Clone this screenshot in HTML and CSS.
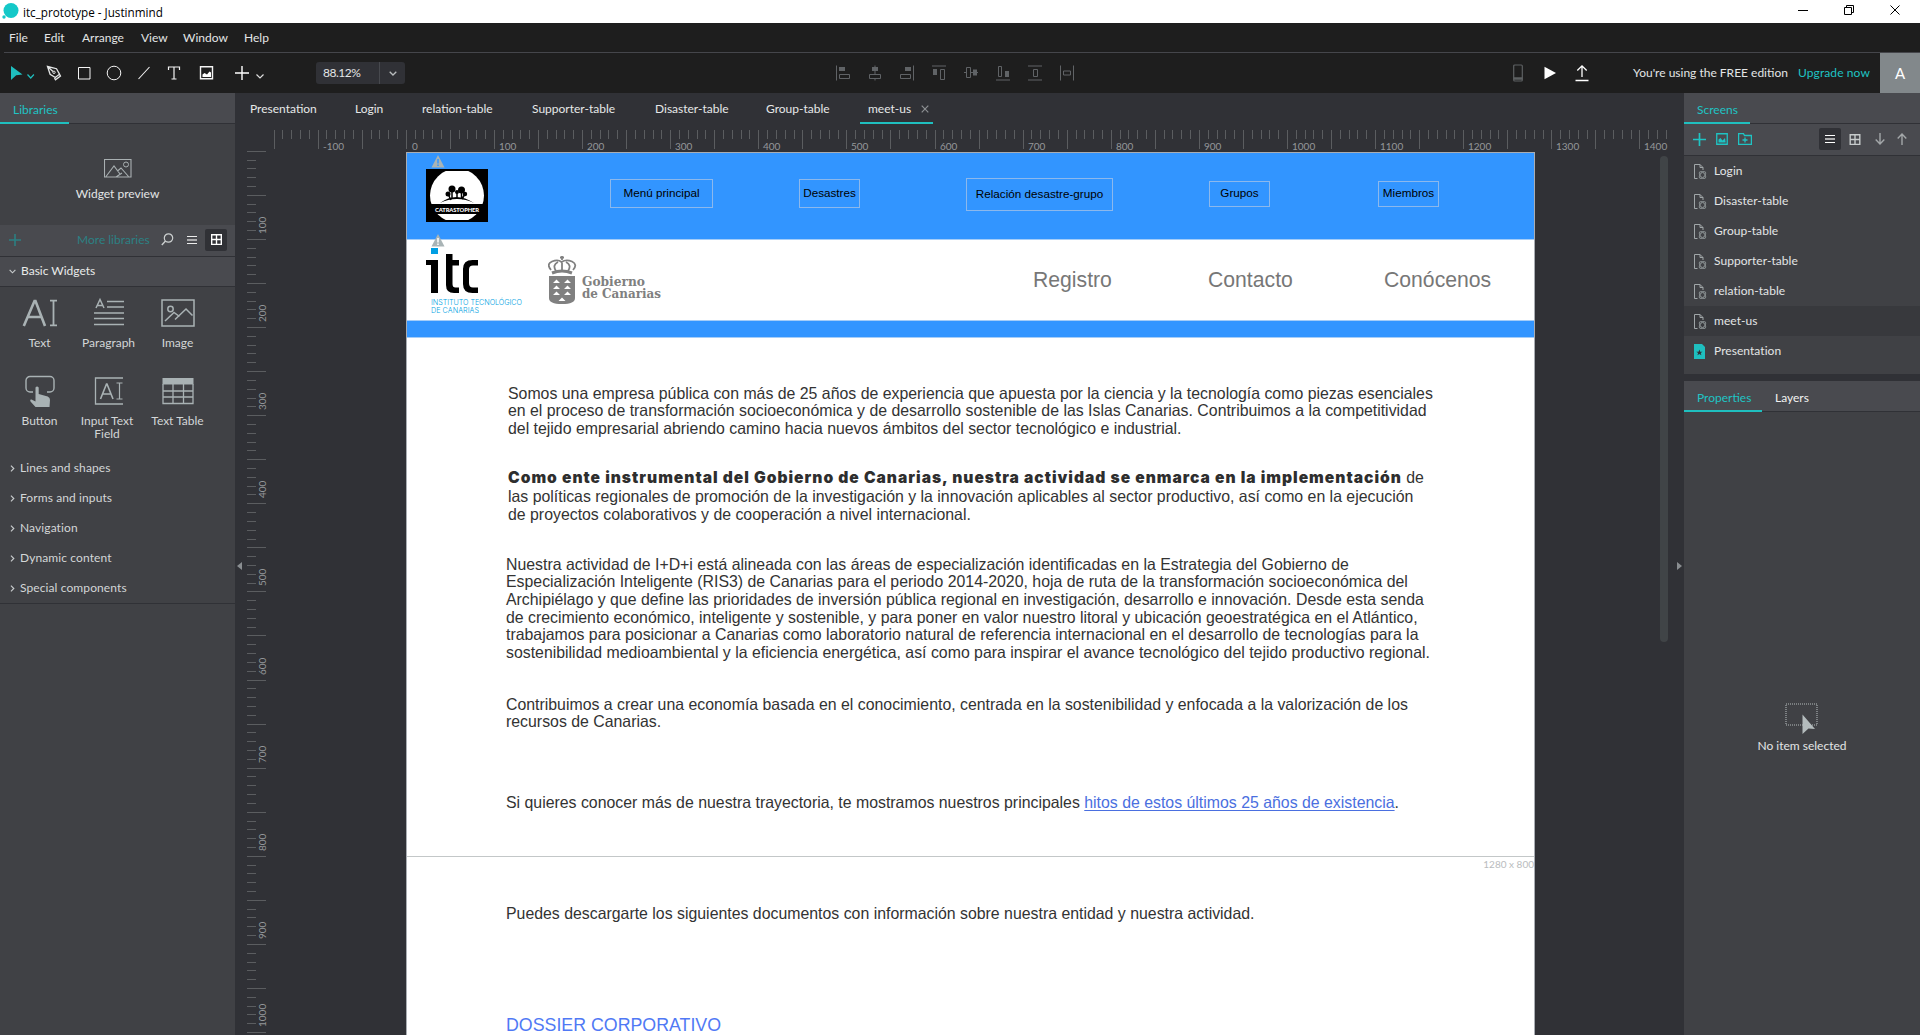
FILE: index.html
```html
<!DOCTYPE html>
<html lang="en">
<head>
<meta charset="utf-8">
<title>itc_prototype - Justinmind</title>
<link rel="stylesheet" href="styles.css">
</head>
<body>
<svg class="defs" aria-hidden="true">
  <symbol id="i-screen" viewBox="0 0 14 16"><path d="M4.500 14.500H1.500V.5h5.500l3 3V6" fill="none" stroke="#a0a6a8"/><path d="M7 .500v3h3" fill="none" stroke="#a0a6a8"/><ellipse cx="9.500" cy="11" rx="2.300" ry="4" transform="rotate(-38 9.500 11)" fill="none" stroke="#858b8d"/><ellipse cx="9.500" cy="11" rx="2.300" ry="4" transform="rotate(38 9.500 11)" fill="none" stroke="#858b8d"/></symbol>
  <symbol id="i-warn" viewBox="0 0 14 13"><path d="M7 0L13.500 12.500H.5z" fill="#a9b4b6"/><path d="M7 4v4.500M7 9.500v1.500" stroke="var(--mark)" stroke-width="1.500"/></symbol>
  <symbol id="i-chev" viewBox="0 0 8 5"><path d="M.7.7L4 4 7.300.7" fill="none" stroke="currentColor" stroke-width="1.300"/></symbol>
  <symbol id="i-grid" viewBox="0 0 12 12"><path d="M.75.75h10.500v10.500H.75zM6 .75v10.500M.75 6h10.500" fill="none" stroke="currentColor" stroke-width="1.500"/></symbol>
  <symbol id="i-list" viewBox="0 0 10 10"><path d="M0 1.500h10M0 8.500h10" stroke="currentColor"/><path d="M0 5h10" stroke="currentColor" stroke-width="2" opacity=".6"/></symbol>
</svg>

<header class="titlebar">
  <svg class="logo" width="17" height="17" viewBox="0 0 17 17"><circle cx="9" cy="7.500" r="7.500" fill="#14c8c8"/><circle cx="2" cy="14" r="1.700" fill="#14c8c8"/></svg>
  <span class="title">itc_prototype - Justinmind</span>
  <div class="win">
    <svg width="10" height="12" viewBox="0 0 10 12"><path d="M0 6.500h10" stroke="#000"/></svg>
    <svg width="10" height="12" viewBox="0 0 10 12"><path d="M.5 3.500h7v7h-7zM2.500 3.500v-2h7v7h-2" fill="none" stroke="#000"/></svg>
    <svg width="10" height="12" viewBox="0 0 10 12"><path d="M.5 1.500l9 9M9.500 1.500l-9 9" stroke="#000"/></svg>
  </div>
</header>
<nav class="menu"><span>File</span><span>Edit</span><span>Arrange</span><span>View</span><span>Window</span><span>Help</span></nav>

<div class="toolbar">
  <div class="tools">
    <svg class="select" width="28" height="20" viewBox="0 0 28 20"><path d="M1 3l11.500 8.500-6.300.8L1 17z" fill="#1fbfbf"/><path d="M17.500 11.500l3.200 3.500 3.200-3.500" fill="none" stroke="#1fbfbf" stroke-width="1.200"/></svg>
    <svg width="16" height="16" viewBox="0 0 16 16"><path d="M1.500 1.500l9 2.200 3 5.500-4.200 3.300-5.200-3.200zM1.500 1.500l5.500 5M13.700 9.500l.8 1.500-5 3.800-1-1.800" fill="none" stroke="#e4e6e6" stroke-width="1.300"/><circle cx="8" cy="7.300" r="1.200" fill="none" stroke="#e4e6e6"/></svg>
    <svg width="16" height="16" viewBox="0 0 16 16"><path d="M2.500 2.500h11.500v11.500H2.500z" fill="none" stroke="#f4f4f4"/></svg>
    <svg width="16" height="16" viewBox="0 0 16 16"><circle cx="8" cy="8" r="6.800" fill="none" stroke="#f4f4f4"/></svg>
    <svg width="16" height="16" viewBox="0 0 16 16"><path d="M2.500 14L13.500 2" stroke="#f4f4f4" stroke-width="1.100"/></svg>
    <svg width="16" height="16" viewBox="0 0 16 16"><path d="M2.500 5V2h11v3M8 2v12M5.500 14h5" fill="none" stroke="#f4f4f4" stroke-width="1.200"/></svg>
    <svg class="pic" width="16" height="16" viewBox="0 0 16 16"><path d="M2.500 1.800h12v12h-12z" fill="none" stroke="#f4f4f4" stroke-width="1.400"/><path d="M4.500 12V9.500l2-1.500 2.500 1.500 2.500-3 1.500 1v4.500z" fill="#fff"/></svg>
    <svg class="plus" width="30" height="16" viewBox="0 0 30 16"><path d="M1 8h14M8 1v14" stroke="#fff" stroke-width="1.400"/><path d="M22.500 9.500l3.500 3.500 3.500-3.500" fill="none" stroke="#ddd" stroke-width="1.200"/></svg>
  </div>
  <div class="zoom"><span>88.12%</span><i><svg width="8" height="5"><use href="#i-chev"/></svg></i></div>
  <div class="aligns">
    <svg viewBox="0 0 14 16"><path d="M.5.500v15"/><path d="M3.500 9.500h10v4h-10z"/><path class="f" d="M3 2h6v4H3z"/></svg>
    <svg viewBox="0 0 14 16"><path d="M7 .5v9M7 13.500v2"/><path d="M1.500 9.500h11v4h-11z"/><path class="f" d="M4 2h6v4H4z"/></svg>
    <svg viewBox="0 0 14 16"><path d="M13.500.500v15"/><path d="M.5 9.500h10v4H.5z"/><path class="f" d="M5 2h6v4H5z"/></svg>
    <svg viewBox="0 0 14 16"><path d="M0 1h14"/><path d="M8.500 4.500h4v10h-4z"/><path class="f" d="M1 4h4v6H1z"/></svg>
    <svg viewBox="0 0 14 16"><path d="M0 7.500h2.500M6.500 7.500h7.500"/><path d="M2.500 2.500h4v10h-4z"/><path class="f" d="M9 4.500h4v6H9z"/></svg>
    <svg viewBox="0 0 14 16"><path d="M0 15h14"/><path d="M2.500 1.500h3v10h-3z"/><path class="f" d="M9 6h4v6H9z"/></svg>
    <svg viewBox="0 0 14 16"><path d="M0 1h14M0 15h14"/><path d="M5.500 4.500h4v7h-4z"/></svg>
    <svg viewBox="0 0 14 16"><path d="M.5.500v15M13.500.500v15"/><path d="M3.500 6h7v4h-7z"/></svg>
  </div>
  <div class="actions">
    <svg width="16" height="18" viewBox="0 0 16 18"><rect x="3.700" y="1" width="8.600" height="16" rx="1" fill="none" stroke="#5d6062" stroke-width="1.200"/><path d="M3.500 14.500h9" stroke="#5d6062" stroke-width="2.500"/></svg>
    <svg width="16" height="18" viewBox="0 0 16 18"><path d="M2.500 2.700L14 9 2.500 15.300z" fill="#fff"/></svg>
    <svg width="16" height="18" viewBox="0 0 16 18"><path d="M8 13V2M3.300 6.500L8 1.800l4.700 4.700M1.500 16.500h13" fill="none" stroke="#fff" stroke-width="1.300"/></svg>
  </div>
  <span class="edition">You're using the FREE edition</span>
  <span class="upgrade">Upgrade now</span>
  <span class="avatar">A</span>
</div>

<div class="main">
  <aside class="left">
    <div class="tabhead"><span class="on lib">Libraries</span></div>
    <div class="preview">
      <svg width="28" height="19" viewBox="0 0 28 19"><path d="M.5.500h26.500v17.500H.5zM2 17.500L10 7l6 8M13.500 12L17 9l7.500 8.500M12 18l6-4" fill="none" stroke="#a9b0b2" stroke-width="1.100"/><circle cx="22" cy="5.500" r="2.500" fill="none" stroke="#a9b0b2"/></svg>
      <span>Widget preview</span>
    </div>
    <div class="libbar">
      <svg width="12" height="12" viewBox="0 0 12 12"><path d="M0 6h12M6 0v12" stroke="#2c7f82" stroke-width="1.600"/></svg>
      <span>More libraries</span>
      <svg class="lens" width="13" height="13" viewBox="0 0 13 13"><circle cx="7.500" cy="5" r="4.200" fill="none" stroke="#ccd0d0" stroke-width="1.200"/><path d="M4.500 8L.8 12" stroke="#ccd0d0" stroke-width="1.400"/></svg>
      <svg class="lst" width="10" height="10"><use href="#i-list"/></svg>
      <b><svg width="11" height="11"><use href="#i-grid"/></svg></b>
    </div>
    <div class="cat open"><svg width="7" height="5"><use href="#i-chev"/></svg>Basic Widgets</div>
    <div class="widgets">
      <div><svg viewBox="0 0 36 32"><path d="M1.800 29L12.500 4h1L23 29M5.500 20h14" fill="none" stroke="#a9b2b4" stroke-width="2.600"/><path d="M28 3.700h7M28 28.300h7M31.500 3.700v24.600" stroke="#a9b2b4" stroke-width="1.800"/></svg><span>Text</span></div>
      <div><svg viewBox="0 0 36 32"><path d="M5 11l4-8.500L13 11M6.500 8.500h5" fill="none" stroke="#a9b2b4" stroke-width="1.500"/><path d="M16 4.500h17M16 10h17M3 16h30M3 21.500h30M3 27.500h30" stroke="#a9b2b4" stroke-width="1.700"/></svg><span>Paragraph</span></div>
      <div><svg viewBox="0 0 36 32"><path d="M2 3h32v26H2zM5 24l9-8.500 5.500 4M15 22.500l11-10.500 6.500 6.500" fill="none" stroke="#a9b2b4" stroke-width="1.500"/><circle cx="10.500" cy="12" r="2.700" fill="none" stroke="#a9b2b4" stroke-width="1.500"/></svg><span>Image</span></div>
      <div><svg viewBox="0 0 36 32"><path d="M11 17H8a4 4 0 01-4-4V5.500a4 4 0 014-4h20a4 4 0 014 4V13a4 4 0 01-4 4h-3" fill="none" stroke="#a9b2b4" stroke-width="1.400"/><path d="M13.500 12.500q1.500-2 3.200 0V19l9 2.500q2.500 1 2.300 3.500l-.5 7H13.500l-5-5.500q-1-2.500 1-2l4 2z" fill="#a9b2b4"/></svg><span>Button</span></div>
      <div class="inp"><svg viewBox="0 0 36 32"><path d="M32 3H4.500v26H32" fill="none" stroke="#a9b2b4" stroke-width="1.300"/><path d="M9.500 24L15.500 9h.5l6 15M12 19h8" fill="none" stroke="#a9b2b4" stroke-width="1.600"/><path d="M25.500 8h6M25.500 24h6M28.500 8v16" stroke="#a9b2b4" stroke-width="1.200"/></svg><span>Input Text<br>Field</span></div>
      <div><svg viewBox="0 0 36 32"><path d="M2.500 3h31v6.500h-31z" fill="#a9b2b4"/><path d="M3 9v19.500h30V9M3 16h30M3 22h30M13 9v19.500M23.500 9v19.500" fill="none" stroke="#a9b2b4" stroke-width="1.300"/></svg><span>Text Table</span></div>
    </div>
    <div class="cat"><svg class="r" width="7" height="5"><use href="#i-chev"/></svg>Lines and shapes</div>
    <div class="cat"><svg class="r" width="7" height="5"><use href="#i-chev"/></svg>Forms and inputs</div>
    <div class="cat"><svg class="r" width="7" height="5"><use href="#i-chev"/></svg>Navigation</div>
    <div class="cat"><svg class="r" width="7" height="5"><use href="#i-chev"/></svg>Dynamic content</div>
    <div class="cat"><svg class="r" width="7" height="5"><use href="#i-chev"/></svg>Special components</div>
    <div class="rule"></div>
  </aside>

  <section class="center">
    <div class="tabs"><span>Presentation</span><span>Login</span><span>relation-table</span><span>Supporter-table</span><span>Disaster-table</span><span>Group-table</span><span class="cur">meet-us <svg width="8" height="8" viewBox="0 0 8 8"><path d="M.7.700l6.600 6.600M7.300.700L.7 7.300" stroke="#8d9093" stroke-width="1.200"/></svg></span></div>
    <svg class="hruler" id="hruler" width="1449" height="22"></svg>
    <div class="stage">
      <div class="vcol"><svg id="vruler" width="36" height="883"></svg></div>
      <article class="page">
        <div class="hero">
          <svg class="cat-logo" width="62" height="53" viewBox="0 0 62 53"><path d="M0 0h62v53H0z"/><circle cx="31" cy="26.500" r="27" fill="#fff"/><path d="M0 0h62v53H0z" fill="none" stroke="#000" stroke-width="4"/><path d="M14 34q16-12 34 0q-8-4-17-4t-17 4z"/><circle cx="26" cy="20" r="3.500"/><circle cx="35.500" cy="21" r="3.500"/><circle cx="22" cy="25" r="2.500"/><circle cx="39" cy="25" r="2.200"/><circle cx="31" cy="23" r="2"/><path d="M26 20v10M35.500 21v9M22 25l3 6M39 25l-3 5M31 24v6" stroke="#000" stroke-width="1.500"/><path d="M2 35h58v10H2z"/><text x="9" y="42.500" textLength="44" fill="#fff" font-family="Lato" font-weight="900" font-size="5.800">CATRASTOPHER</text></svg>
          <svg class="warn" width="14" height="13"><use href="#i-warn"/></svg>
          <span class="btn b1">Menú principal</span>
          <span class="btn b2">Desastres</span>
          <span class="btn b3">Relación desastre-grupo</span>
          <span class="btn b4">Grupos</span>
          <span class="btn b5">Miembros</span>
        </div>
        <div class="brand">
          <svg class="itc" width="100" height="70" viewBox="0 0 100 70"><path d="M5 0h7v6H5z" fill="#009fe3"/><path d="M0 12h12v33H5V17H0zM20 6h6.500v6H33v5.500h-6.500V36q0 3.500 3 3.500H33V45h-5q-8 0-8-8zM52 12v5.500h-5q-4 0-4 4V35q0 4.500 4 4.500h5V45h-5.500Q37 45 37 36V21q0-9 9.500-9z"/><g fill="#009fe3" font-family="Inter" font-weight="300" font-size="7.200"><text x="5" y="57" textLength="91">INSTITUTO TECNOLÓGICO</text><text x="5" y="64.500" textLength="48">DE CANARIAS</text></g></svg>
          <svg class="warn" width="14" height="13"><use href="#i-warn"/></svg>
          <svg class="gob" width="150" height="54" viewBox="0 0 150 54"><g fill="none" stroke="#808080" stroke-width="1.800"><path d="M3 14Q-2 8 4 5.500q6-2.500 9.500.500Q18 3 24 5.500q6 3 1 8.500M8 15q-4-6 2-9M20 15q4-6-2-9M14 5v9M14 0v4M12 1.500h4"/><path d="M4 17q10-4 20 0" stroke-width="3"/></g><path d="M1 20h26v22q0 6-13 6T1 42z" fill="#808080"/><path d="M5 27l3.500-3.500L12 27zM16 27l3.500-3.500L23 27zM5 33l3.500-3.500L12 33zM16 33l3.500-3.500L23 33zM5 39l3.500-3.500L12 39zM16 39l3.500-3.500L23 39zM10.500 45l3.500-3.500 3.500 3.500z" fill="#fff"/><g fill="#808080" font-family="DejaVu Serif" font-weight="bold" font-size="13"><text x="34" y="30" textLength="63" lengthAdjust="spacingAndGlyphs">Gobierno</text><text x="34" y="42" textLength="79" lengthAdjust="spacingAndGlyphs">de Canarias</text></g></svg>
          <span class="lk l1">Registro</span><span class="lk l2">Contacto</span><span class="lk l3">Conócenos</span>
        </div>
        <div class="strip"></div>
        <div class="copy">
          <p class="p1">Somos una empresa pública con más de 25 años de experiencia que apuesta por la ciencia y la tecnología como piezas esenciales<br>en el proceso de transformación socioeconómica y de desarrollo sostenible de las Islas Canarias. Contribuimos a la competitividad<br>del tejido empresarial abriendo camino hacia nuevos ámbitos del sector tecnológico e industrial.</p>
          <p class="p2"><span class="lead"><b>Como ente instrumental del Gobierno de Canarias, nuestra actividad se enmarca en la implementación</b> de</span>las políticas regionales de promoción de la investigación y la innovación aplicables al sector productivo, así como en la ejecución<br>de proyectos colaborativos y de cooperación a nivel internacional.</p>
          <p class="p3">Nuestra actividad de I+D+i está alineada con las áreas de especialización identificadas en la Estrategia del Gobierno de<br>Especialización Inteligente (RIS3) de Canarias para el periodo 2014-2020, hoja de ruta de la transformación socioeconómica del<br>Archipiélago y que define las prioridades de inversión pública regional en investigación, desarrollo e innovación. Desde esta senda<br>de crecimiento económico, inteligente y sostenible, y para poner en valor nuestro litoral y ubicación geoestratégica en el Atlántico,<br>trabajamos para posicionar a Canarias como laboratorio natural de referencia internacional en el desarrollo de tecnologías para la<br>sostenibilidad medioambiental y la eficiencia energética, así como para inspirar el avance tecnológico del tejido productivo regional.</p>
          <p class="p4">Contribuimos a crear una economía basada en el conocimiento, centrada en la sostenibilidad y enfocada a la valorización de los<br>recursos de Canarias.</p>
          <p class="p5">Si quieres conocer más de nuestra trayectoria, te mostramos nuestros principales <a>hitos de estos últimos 25 años de existencia</a>.</p>
        </div>
        <div class="fold">1280 x 800</div>
        <div class="below">
          <p>Puedes descargarte los siguientes documentos con información sobre nuestra entidad y nuestra actividad.</p>
          <p class="dossier">DOSSIER CORPORATIVO</p>
        </div>
      </article>
      <div class="scroll"></div>
    </div>
    <i class="fl"></i><i class="fr"></i>
  </section>

  <aside class="right">
    <div class="tabhead"><span class="on scr">Screens</span></div>
    <div class="scrbar">
      <svg width="13" height="13" viewBox="0 0 13 13"><path d="M0 6.500h13M6.500 0v13" stroke="#1fc4c4" stroke-width="1.700"/></svg>
      <svg class="m1" width="12" height="12" viewBox="0 0 12 12"><path d="M.75.75h10.500v10.500H.75z" fill="none" stroke="#1fc4c4" stroke-width="1.300"/><path d="M2.500 9.500V6.500L4.500 5l2 2.500L9 5l.7 4.500z" fill="#1fc4c4"/></svg>
      <svg class="m2" width="14" height="12" viewBox="0 0 14 12"><path d="M.6 11.300V.7h4.900l1 1.800h6.900v8.800zM7 4.500v5M4.500 7h5" fill="none" stroke="#1fc4c4" stroke-width="1.300"/></svg>
      <b><svg width="10" height="10"><use href="#i-list"/></svg></b>
      <svg class="m3" width="12" height="11"><use href="#i-grid"/></svg>
      <svg class="m4" width="10" height="12" viewBox="0 0 10 12"><path d="M5 0v11M.7 6.500L5 11l4.300-4.500" fill="none" stroke="currentColor" stroke-width="1.400"/></svg>
      <svg class="m5" width="10" height="12" viewBox="0 0 10 12"><path d="M5 12V1M.7 5.500L5 1l4.300 4.500" fill="none" stroke="currentColor" stroke-width="1.400"/></svg>
    </div>
    <ul class="screens">
      <li><svg><use href="#i-screen"/></svg>Login</li>
      <li><svg><use href="#i-screen"/></svg>Disaster-table</li>
      <li><svg><use href="#i-screen"/></svg>Group-table</li>
      <li><svg><use href="#i-screen"/></svg>Supporter-table</li>
      <li><svg><use href="#i-screen"/></svg>relation-table</li>
      <li class="sel"><svg><use href="#i-screen"/></svg>meet-us</li>
      <li><svg viewBox="0 0 14 16"><path d="M1 0h8l3 3v12H1z" fill="#1fbfbf"/><path d="M6.400 5.500l.8 2.200h2.300L7.700 9l.7 2.300-2-1.400-2 1.400L5.100 9 3.300 7.700h2.300z" fill="#303136"/></svg>Presentation</li>
    </ul>
    <div class="tabhead props"><span class="on prp">Properties</span><span class="lay">Layers</span></div>
    <div class="empty">
      <svg width="34" height="32" viewBox="0 0 34 32"><path d="M1 2h31v21H1z" fill="none" stroke="#8d9294" stroke-width="1.600" stroke-dasharray="1 1"/><path d="M17.500 12.500L30 27l-6.500-.500L17.500 32z" fill="#b4bcbd"/></svg>
      <span>No item selected</span>
    </div>
  </aside>
</div>
<script src="rulers.js"></script>
</body>
</html>
```
FILE: styles.css
```css
* { box-sizing: border-box; }
body { margin: 0; width: 1920px; height: 1035px; overflow: hidden; background: #303136; color: #e3e5e6; font: 12px/16px Lato, "Open Sans", sans-serif; }
svg { display: block; flex: none; }
.defs { position: absolute; width: 0; height: 0; }

.titlebar { height: 23px; background: #fff; color: #000; display: flex; align-items: center; padding-left: 2px; }
.title { font: 11.7px/20px "Open Sans", sans-serif; margin-left: 4px; }
.logo { margin-top: -1px; }
.win { margin-left: auto; display: flex; gap: 36px; padding-right: 20px; margin-top: -3px; }

.menu { height: 30px; margin-left: 4px; padding-left: 5px; background: #1e1e1e; border-bottom: 1px solid #45464b; box-shadow: -4px 0 #1e1e1e; display: grid; grid-template-columns: 35px 38px 59px 42px 61px auto; line-height: 29px; }

.toolbar { height: 40px; background: #1e1e1e; display: flex; align-items: center; }
.tools { width: 316px; display: flex; align-items: center; gap: 14px; padding-left: 10px; }
.tools .select { margin-right: -6px; }
.tools .pic { margin-left: 2px; }
.tools .plus { margin-left: 6px; }
.zoom { width: 89px; height: 22px; border-radius: 3px; background: #303136; display: flex; line-height: 22px; }
.zoom span { width: 64px; padding-left: 7px; border-right: 1px solid #47494e; letter-spacing: -.5px; }
.zoom i { flex: 1; display: grid; place-items: center; color: #b8bcbd; }
.aligns { margin-left: 431px; display: flex; gap: 18px; }
.aligns svg { width: 14px; height: 16px; fill: none; stroke: #606366; }
.aligns .f { fill: #606366; stroke: none; }
.actions { display: flex; gap: 16px; margin-left: 436px; }
.edition { margin-left: 43px; width: 165px; white-space: nowrap; }
.upgrade { color: #1fc4c4; width: 82px; letter-spacing: .1px; white-space: nowrap; }
.avatar { flex: 1; align-self: stretch; background: #82888b; color: #fff; font-size: 15px; line-height: 41px; text-align: center; }

.main { display: flex; height: 942px; }
.left { width: 235px; background: #404145; }
.tabhead { height: 31px; background: #494a4f; border-bottom: 1px solid #303136; display: flex; }
.on { color: #1fc4c4; height: 31px; border-bottom: 2px solid #1fbfbf; line-height: 34px; }
.lib { width: 69px; padding-left: 13px; }
.preview { height: 101px; padding-top: 35px; display: flex; flex-direction: column; align-items: center; gap: 8px; }
.libbar { height: 32px; background: #494a4f; border-bottom: 1px solid #303136; display: flex; align-items: center; color: #ececec; padding: 0 0 2px 9px; }
.libbar span { color: #2c8184; width: 71px; margin-left: 56px; white-space: nowrap; }
.lens { margin-left: 13px; }
.lst { margin-left: 13px; }
.libbar b, .scrbar b { width: 22px; height: 22px; border-radius: 2px; background: #303136; display: grid; place-items: center; color: #fff; }
.libbar b { margin-left: 8px; }
.cat { height: 30px; line-height: 30px; padding-left: 9px; display: flex; align-items: center; gap: 5px; color: #d3d6d7; letter-spacing: .1px; }
.cat svg { color: #c8cccd; }
.cat .r { transform: rotate(-90deg); margin-right: -1px; }
.open { background: #494a4f; border-bottom: 1px solid #303136; color: #e8eaea; padding-bottom: 1px; letter-spacing: 0; }
.widgets { height: 166px; display: grid; grid-template-columns: repeat(3, 69px); grid-template-rows: 78px 85px; padding: 10px 0 0 5px; text-align: center; line-height: 13px; color: #d3d6d7; }
.widgets div { display: flex; flex-direction: column; align-items: center; gap: 7px; }
.widgets svg { width: 36px; height: 32px; }
.widgets span { white-space: nowrap; }
.inp span { margin-left: -3px; }
.rule { height: 1px; background: #303136; }

.center { width: 1449px; position: relative; display: flex; flex-direction: column; background: #303136; }
.tabs { height: 37px; display: grid; grid-template-columns: 105px 67px 110px 123px 111px 94px 73px; padding-left: 15px; line-height: 31px; color: #e6e8e8; }
.cur { height: 31px; border-bottom: 2px solid #1fbfbf; padding: 2px 0 0 8px; display: flex; align-items: center; gap: 10px; }
.hruler, .vcol { flex: none; }
.stage { height: 883px; display: flex; }
.vcol { width: 171px; }
.vcol svg { overflow: visible; margin-top: -1px; }
.hruler line, .vcol line { stroke: #5b5d60; shape-rendering: crispEdges; }
.hruler text, .vcol text { fill: #94979a; font: 10px Lato, sans-serif; }

.page { width: 1129px; border: 1px solid #a9adb3; border-bottom: 0; background: #fff; overflow: hidden; color: #333; font: 15.86px/17.67px "Liberation Sans", Arial, sans-serif; white-space: nowrap; }
.hero { position: relative; height: 87px; background: #3295ff; border-bottom: 1px solid #a5cdf8; display: flex; align-items: flex-start; }
.cat-logo { margin: 16px 0 0 19px; }
.warn { position: absolute; left: 24px; top: 2px; --mark: #3295ff; }
.btn { border: 1px solid #8cb8ec; color: #000; font-size: 11.7px; text-align: center; display: grid; place-items: center; padding-bottom: 2px; }
.b1 { margin: 26px 0 0 122px; width: 103px; height: 29px; }
.b2 { margin: 26px 0 0 86px; width: 61px; height: 29px; }
.b3 { margin: 25px 0 0 106px; width: 147px; height: 33px; }
.b4 { margin: 28px 0 0 96px; width: 61px; height: 26px; }
.b5 { margin: 28px 0 0 108px; width: 61px; height: 26px; }
.brand { position: relative; height: 80px; display: flex; align-items: flex-start; color: #777; font-size: 21.2px; }
.brand .warn { top: -6px; --mark: #fff; }
.itc { margin: 8px 0 0 19px; }
.gob { margin: 16px 0 0 22px; }
.lk { margin-top: 31px; }
.l1 { margin-left: 335px; width: 175px; }
.l2 { width: 176px; }
.strip { height: 18px; background: #3295ff; border: solid #a5cdf8; border-width: 1px 0; }
.copy { height: 518px; padding: 46.500px 0 0 99px; }
p { margin: 0; }
.p1, .p2 { padding-left: 2px; }
.p1 { height: 83.500px; }
.p2 { height: 87.500px; }
.lead { display: block; line-height: 20px; }
.lead b { font: 900 15.6px/20px Inter, sans-serif; letter-spacing: .995px; color: #2e2e2e; }
.p3 { height: 140px; }
.p4 { height: 98px; }
.copy a { color: #4a6fe0; text-decoration: underline; text-underline-offset: 2px; }
.fold { height: 20px; border-top: 1px solid #c3c7c8; text-align: right; color: #b9bcbe; font: 10px/15px Lato, sans-serif; }
.below { padding: 28.500px 0 0 99px; }
.dossier { margin-top: 95px; color: #5079f5; font-size: 17.8px; }
.scroll { width: 8px; height: 486px; margin: 4px 0 0 125px; border-radius: 4px; background: #404447; }
.fl, .fr { position: absolute; top: 469px; border: solid transparent; border-width: 4.500px 5px; }
.fl { left: -3px; border-right-color: #8a8e91; }
.fr { right: -3px; border-left-color: #8a8e91; }

.right { width: 236px; background: #404145; }
.scr { width: 66px; padding-left: 13px; }
.scrbar { height: 32px; background: #494a4f; border-bottom: 1px solid #303136; display: flex; align-items: center; padding: 0 0 1px 9px; color: #c7cbcc; }
.m1 { margin-left: 10px; }
.m2 { margin-left: 10px; }
.scrbar b { margin-left: 67px; }
.m3 { margin-left: 8px; }
.m4 { margin-left: 14px; color: #a3a7a9; }
.m5 { margin-left: 12px; color: #a3a7a9; }
.screens { list-style: none; margin: 0; padding: 0; height: 218px; }
.screens li { height: 30px; padding: 0 0 0 9px; display: flex; align-items: center; gap: 7px; letter-spacing: .05px; }
.screens svg { width: 14px; height: 16px; margin-top: 1px; }
.sel { background: #38393d; }
.props { height: 38px; border-top: 7px solid #303136; }
.prp { width: 78px; padding-left: 13px; }
.lay { line-height: 34px; padding-left: 13px; color: #f2f2f2; }
.empty { padding: 290px 0 0; display: flex; flex-direction: column; align-items: center; gap: 4px; }
```
FILE: rulers.js
```js
// Draws both rulers: a tick every 10 units, long every 50, a number every 100.
const SCALE = 0.8812;
const NS = 'http://www.w3.org/2000/svg';
function add(svg, name, attrs, text) {
  const el = document.createElementNS(NS, name);
  for (const k in attrs) el.setAttribute(k, attrs[k]);
  if (text !== undefined) el.textContent = text;
  svg.appendChild(el);
}
const h = document.getElementById('hruler');
for (let i = -15; i <= 143; i++) {
  const x = Math.floor(171.3 + i * 10 * SCALE) + 0.5;
  add(h, 'line', { x1: x, x2: x, y1: 0, y2: i % 5 ? 9 : 19 });
  if (i % 10 === 0) add(h, 'text', { x: x + (i ? 4.5 : 5.5), y: 20 }, i * 10);
}
const v = document.getElementById('vruler');
for (let i = 0; i <= 100; i++) {
  const y = Math.floor(0.3 + i * 10 * SCALE) + 0.5;
  add(v, 'line', { x1: 12, x2: i % 5 ? 21 : 31, y1: y, y2: y });
  if (i && i % 10 === 0) add(v, 'text', { transform: `translate(31 ${y - 5.5}) rotate(-90)` }, i * 10);
}
```
